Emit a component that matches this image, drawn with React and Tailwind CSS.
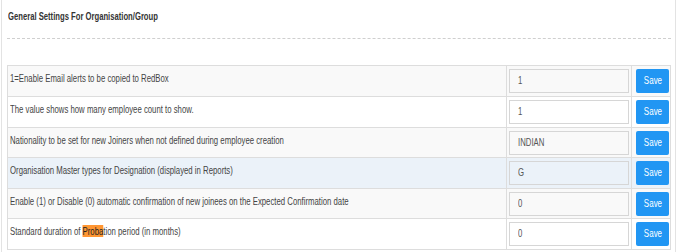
import React from 'react';

const rows = [
  { label: '1=Enable Email alerts to be copied to RedBox', value: '1', bg: 'bg-[#f9f9f9]', h: 'h-[31px]' },
  { label: 'The value shows how many employee count to show.', value: '1', bg: 'bg-white', h: 'h-[31px]' },
  { label: 'Nationality to be set for new Joiners when not defined during employee creation', value: 'INDIAN', bg: 'bg-[#f9f9f9]', h: 'h-[30px]' },
  { label: 'Organisation Master types for Designation (displayed in Reports)', value: 'G', bg: 'bg-[#ebf2f9]', h: 'h-[31px]' },
  { label: 'Enable (1) or Disable (0) automatic confirmation of new joinees on the Expected Confirmation date', value: '0', bg: 'bg-[#f9f9f9]', h: 'h-[30px]' },
  { label: 'probation', value: '0', bg: 'bg-white', h: 'h-[31px]' },
];

const font = "font-['Liberation_Sans',Arial,sans-serif]";
// the screenshot is squeezed sideways, so text is narrowed
const narrow = 'inline-block origin-left scale-x-[0.74] whitespace-nowrap';

const SettingRow = ({ row }) => (
  <div className={`grid grid-cols-[498px_125px_40px] border-t border-[#dddddd] ${row.bg} ${row.h}`}>
    <div className="pl-[2px] pt-[6px] text-[10.5px] leading-[13px] text-[#444] whitespace-nowrap overflow-hidden">
      {row.label === 'probation' ? (
        <span className={narrow}>
          Standard duration of <span className="bg-[#ff9632] text-[#222]">Proba</span>tion period (in months)
        </span>
      ) : (
        <span className={narrow}>{row.label}</span>
      )}
    </div>
    <div className="border-l border-[#dddddd] pl-[2px] pt-[3px]">
      <div className="w-[120px] h-[24px] border border-[#d6d6d6] pl-[8px] flex items-center text-[10.5px] text-[#555]">
        <span className={narrow}>{row.value}</span>
      </div>
    </div>
    <div className="border-l border-[#dddddd] pl-[4px] pt-[3px]">
      <button className={`${font} w-[33px] h-[24px] rounded-[2px] bg-[#2196f3] text-white text-[10.5px] flex items-center justify-center`}>
        <span className="inline-block scale-x-[0.76]">Save</span>
      </button>
    </div>
  </div>
);

export default function App() {
  return (
    <div className={`${font} w-[681px] h-[252px] bg-white overflow-hidden`}>
      <div className="ml-[1px] w-[675px] h-[252px] border-l border-r border-[#e3e3e3] pl-[5px]">
        <div className="pt-[10px] h-[38px] text-[10.5px] leading-[13px] text-[#333] font-semibold pl-[1px]">
          <span className="inline-block origin-left scale-x-[0.73] whitespace-nowrap">
            General Settings For Organisation/Group
          </span>
        </div>
        <div className="w-[664px] border-t border-dashed border-[#cfcfcf]" />
        <div className="mt-[26px] w-[664px] border-l border-r border-[#dddddd]">
          {rows.map((row, i) => (
            <SettingRow key={i} row={row} />
          ))}
          <div className="border-t border-[#dddddd]" />
        </div>
      </div>
    </div>
  );
}
